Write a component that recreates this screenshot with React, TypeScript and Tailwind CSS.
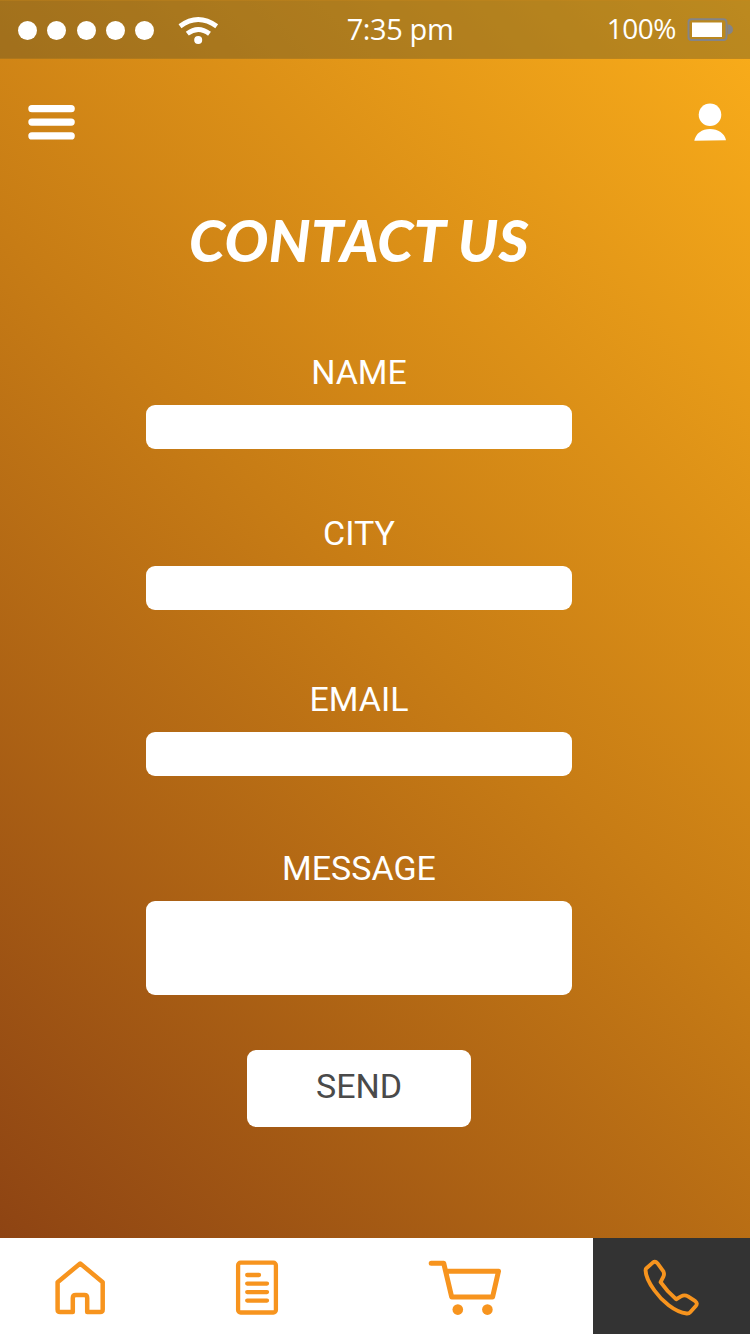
import React from "react";

type FieldProps = {
  label: string;
  name: string;
  className?: string;
  multiline?: boolean;
};

const labelFont = "font-['Roboto',sans-serif]";
const statusFont = "font-['Open_Sans',sans-serif]";

function Field({ label, name, className = "", multiline = false }: FieldProps) {
  return (
    <label className={`flex w-[426px] flex-col items-center ${className}`}>
      <span className={`${labelFont} h-[53px] text-[34px] leading-[40px] text-white`}>{label}</span>
      {multiline ? (
        <textarea name={name} className="h-[94px] w-full resize-none rounded-[9px] bg-white outline-none" />
      ) : (
        <input name={name} className="h-[44px] w-full rounded-[9px] bg-white outline-none" />
      )}
    </label>
  );
}

function WifiIcon() {
  return (
    <svg className="ml-[22px] h-[30px] w-[44px]" viewBox="176 15 44 30" fill="none" stroke="#fff">
      <path d="M180 26.200Q198 12.800 216.700 26.200" strokeWidth="4.800" />
      <path d="M187.300 33.700Q198 25.300 209.500 33.700" strokeWidth="4.800" />
      <circle cx="198.200" cy="40" r="4" fill="#fff" stroke="none" />
    </svg>
  );
}

function BatteryIcon() {
  return (
    <svg className="h-[26px] w-[48px]" viewBox="686 18 48 26">
      <path d="M727.500 25.500H728A5 5 0 0 1 728 35.500H727.500Z" fill="#848488" />
      <rect x="688.500" y="20.300" width="38" height="20.700" rx="3" fill="none" stroke="#848488" strokeWidth="1.900" />
      <rect x="692" y="23.500" width="30" height="14.500" fill="#fff" />
    </svg>
  );
}

function StatusBar() {
  return (
    <div className={`${statusFont} grid h-[59px] shrink-0 grid-cols-[1fr_120px_1fr] items-center border-y border-[#c9861c55] bg-[#524d2a5e] pt-px text-white`}>
      <div className="flex items-center pl-[18px]">
        <div className="flex gap-[10.300px]">
          {[0, 1, 2, 3, 4].map((dot) => (
            <span key={dot} className="size-[19px] rounded-full bg-white" />
          ))}
        </div>
        <WifiIcon />
      </div>
      <span className="-mr-[20px] -ml-[20px] -translate-y-px pl-[50px] text-center text-[29px] leading-[40px] tracking-[-0.400px] whitespace-nowrap">7:35 pm</span>
      <div className="flex items-center justify-end gap-[10px] pr-[16px]">
        <span className="-translate-y-[2px] text-[28px] leading-[40px] tracking-[-0.500px]">100%</span>
        <BatteryIcon />
      </div>
    </div>
  );
}

function Header() {
  return (
    <header className="flex h-[100px] shrink-0 items-start justify-between pt-[43px] pr-[22px] pl-[27px]">
      <button aria-label="Menu" className="pt-[2px]">
        <svg className="h-[36px] w-[50px]" viewBox="27 104 50 36" fill="#fff">
          <rect x="28.300" y="105" width="46.500" height="7.300" rx="3.600" />
          <rect x="28.300" y="118.400" width="46.500" height="7.300" rx="3.600" />
          <rect x="28.300" y="132.200" width="46.500" height="7.300" rx="3.600" />
        </svg>
      </button>
      <button aria-label="Account">
        <svg className="h-[40px] w-[36px]" viewBox="692 102 36 40" fill="#fff">
          <circle cx="710" cy="114.700" r="11.300" />
          <path d="M694.300 140.800C695.500 133.500 702 129 710 129S724.700 133.500 726 140.200z" />
        </svg>
      </button>
    </header>
  );
}

function HomeIcon() {
  return (
    <svg className="h-[56px] w-[52px]" viewBox="54 1260 52 56" fill="none" stroke="#f7941e" strokeWidth="4.500" strokeLinecap="round" strokeLinejoin="round">
      <path d="M80.200 1263.500L57.600 1282.200V1309.500Q57.600 1312 60.100 1312H72.800V1298Q72.800 1295 75.800 1295H84.500Q87.200 1295 87.200 1298V1312H100.200Q102.700 1312 102.700 1309.500V1282.200Z" />
    </svg>
  );
}

function DocumentIcon() {
  return (
    <svg className="h-[56px] w-[44px]" viewBox="235 1260 44 56" fill="none" stroke="#f7941e" strokeWidth="4.300" strokeLinecap="round">
      <rect x="238.100" y="1262.700" width="37.800" height="49.800" rx="2.500" />
      <path d="M247.200 1275h11.800M247.200 1283.600h19.800M247.200 1292.100h19.800M247.200 1300.600h19.800" />
    </svg>
  );
}

function CartIcon() {
  return (
    <svg className="h-[58px] w-[74px]" viewBox="428 1258 74 58" fill="none" stroke="#f7941e" strokeWidth="5" strokeLinecap="round" strokeLinejoin="round">
      <path d="M431.200 1263.200H443.700L451.700 1297H492.600L498.500 1271.200H447" />
      <circle cx="457.800" cy="1309.600" r="5.300" fill="#f7941e" stroke="none" />
      <circle cx="487.400" cy="1309.600" r="5.300" fill="#f7941e" stroke="none" />
    </svg>
  );
}

function PhoneIcon() {
  return (
    <svg className="h-[60px] w-[58px]" viewBox="642 1258 58 60" fill="none" stroke="#f7941e" strokeWidth="3.900" strokeLinejoin="round">
      <path d="M646.400 1268.200L652.800 1262.600Q655.300 1260.700 657.400 1263.200L663 1270.800Q664.700 1273.400 663.500 1276.400L660.600 1282.200Q667 1291.500 676.200 1299.200L681 1296.400Q684.500 1294.400 688 1296.400L695.300 1301.200Q698 1303.400 695.800 1306L690.200 1312.200Q688.900 1313.700 686.700 1313.500C674.500 1312 661.500 1300.500 654.500 1290.500Q645.800 1278.500 645.600 1270.600Q645.500 1269.100 646.400 1268.200Z" />
    </svg>
  );
}

function BottomNav() {
  return (
    <nav className="flex h-[96px] shrink-0 bg-white">
      <button aria-label="Home" className="flex w-[160px] justify-center pt-[22px]"><HomeIcon /></button>
      <button aria-label="Orders" className="flex w-[194px] justify-center pt-[22px]"><DocumentIcon /></button>
      <button aria-label="Cart" className="flex w-[239px] items-start pt-[20px] pl-[74px]"><CartIcon /></button>
      <button aria-label="Contact" className="flex flex-1 items-start bg-[#333333] pt-[20px] pl-[49px]"><PhoneIcon /></button>
    </nav>
  );
}

export default function App() {
  return (
    <div className="flex h-[1334px] w-[750px] flex-col overflow-hidden bg-[linear-gradient(45deg,#8c4213_3%,#c77c15_53%,#fbae1a_100%)]">
      <StatusBar />
      <Header />
      <main className="flex flex-1 flex-col items-center pr-[32px]">
        <h1 className="mt-[41px] h-[80px] text-center font-['Lato',sans-serif] text-[58px] leading-[80px] font-black tracking-[0.400px] whitespace-nowrap text-white italic">
          CONTACT US
        </h1>
        <form className="flex flex-col items-center" onSubmit={(event) => event.preventDefault()}>
          <Field label="NAME" name="name" className="mt-[72px]" />
          <Field label="CITY" name="city" className="mt-[64px]" />
          <Field label="EMAIL" name="email" className="mt-[69px]" />
          <Field label="MESSAGE" name="message" className="mt-[72px]" multiline />
          <button type="submit" className={`${labelFont} mt-[55px] h-[77px] w-[224px] rounded-[9px] bg-white pb-[5px] text-[34px] leading-[40px] text-[#4a4a4a]`}>
            SEND
          </button>
        </form>
      </main>
      <BottomNav />
    </div>
  );
}
